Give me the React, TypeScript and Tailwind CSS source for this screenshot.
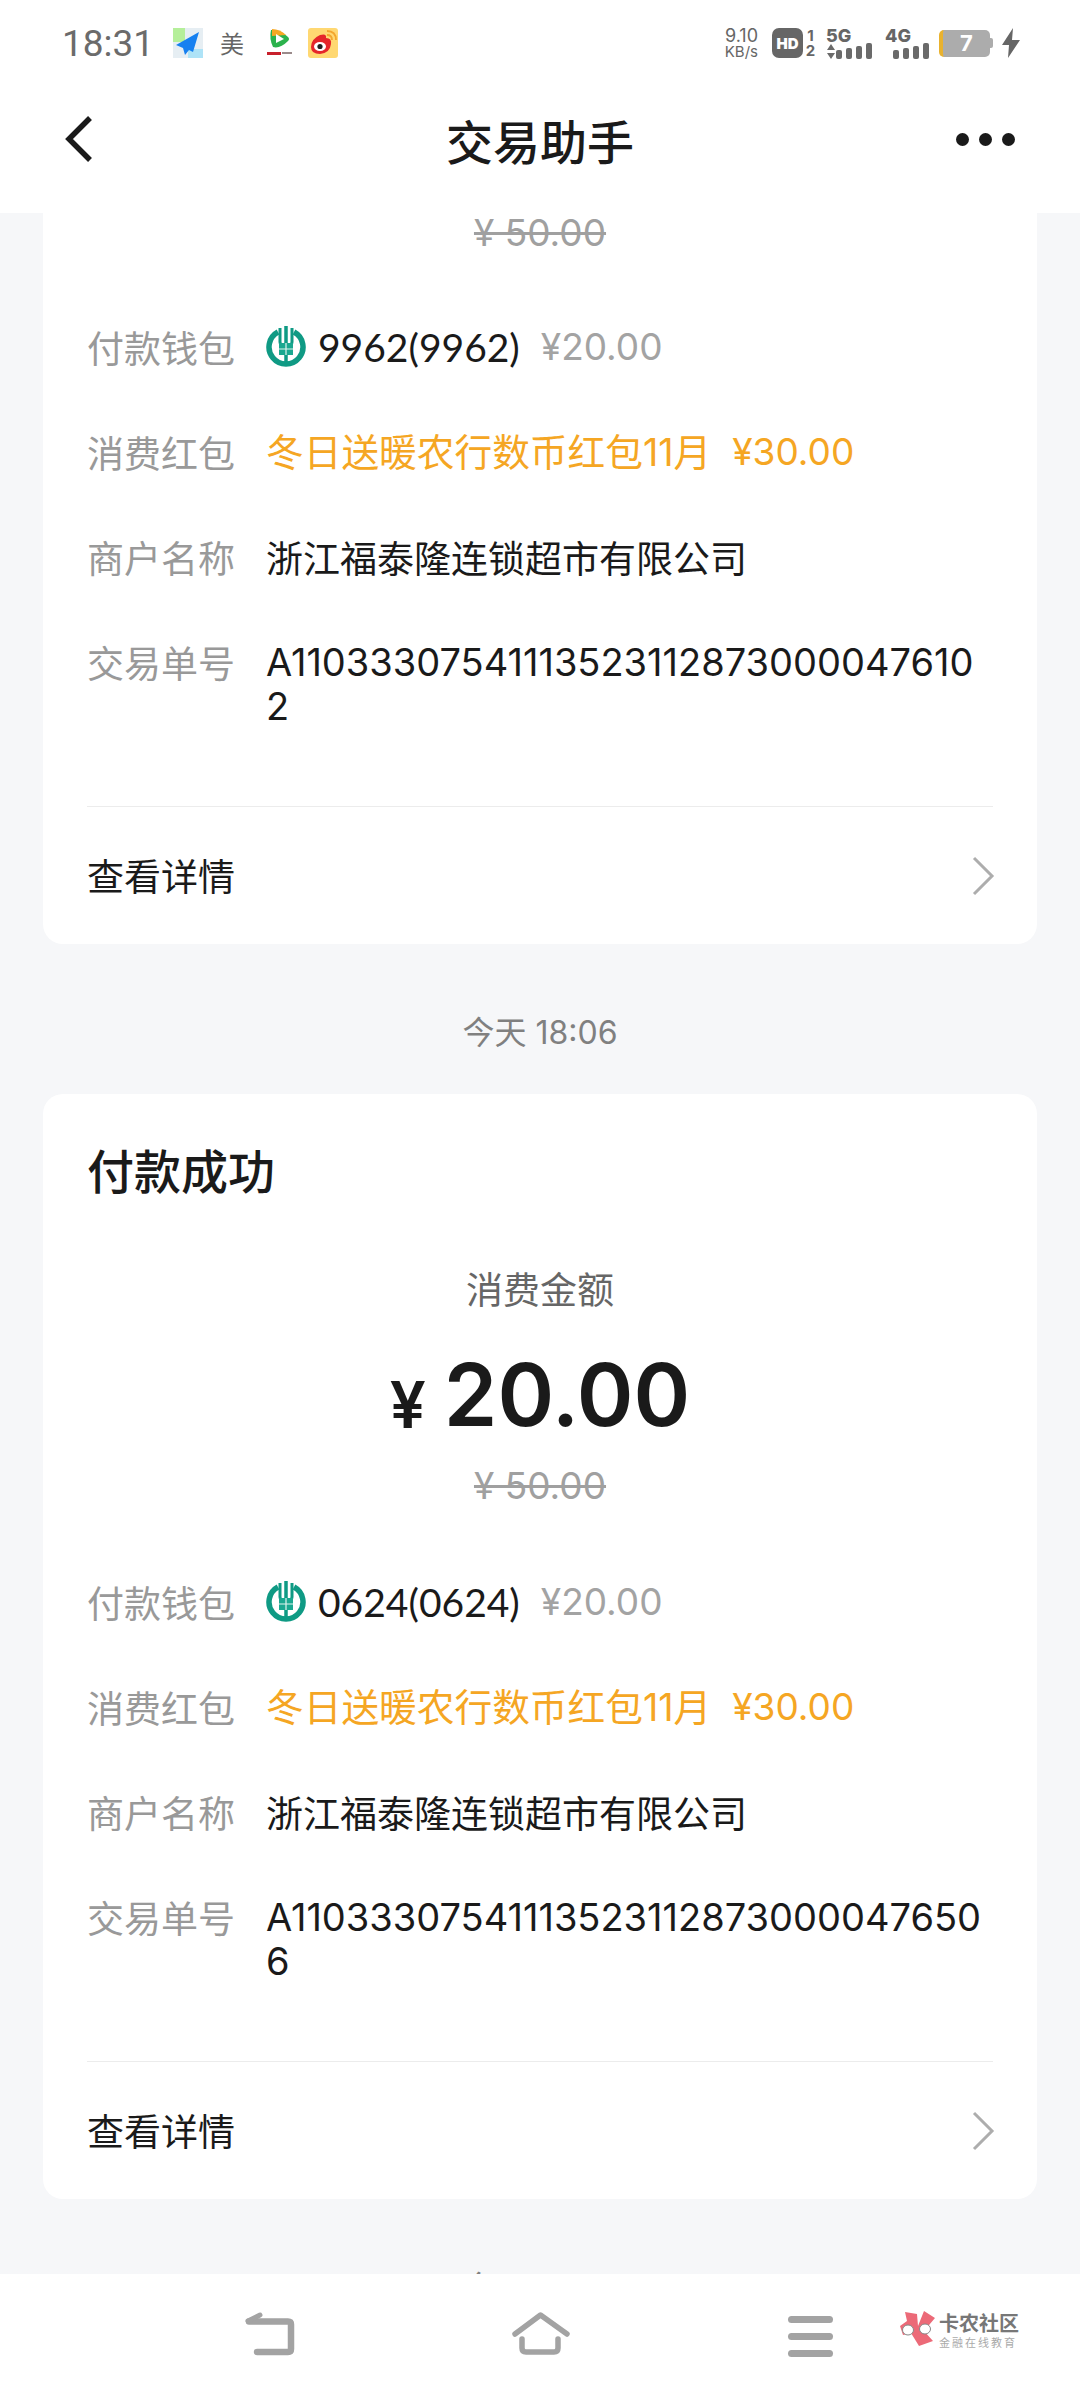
import React from 'react';

const cjk = "font-['Noto_Sans_CJK_SC','Noto_Sans',sans-serif]";

function BankIcon() {
  return (
    <svg width="40" height="42" viewBox="0 0 40 42" className="shrink-0">
      <path d="M12 6 A17 17 0 1 0 28 6" fill="none" stroke="#0f9a84" strokeWidth="5.5" />
      <path d="M14 2 V16 Q14 20 20 20 Q26 20 26 16 V2" fill="none" stroke="#0f9a84" strokeWidth="3" />
      <path d="M20 0 V36" stroke="#0f9a84" strokeWidth="3.5" />
      <rect x="13" y="17" width="14" height="12" fill="#1aa890" />
      <path d="M13 23 H27 M20 17 V29" stroke="#dff3ee" strokeWidth="1.2" />
    </svg>
  );
}

function Signal() {
  const heights = [9, 11, 13, 16];
  return (
    <div className="flex items-end gap-[4px]">
      {heights.map((h, i) => (
        <span key={i} className="w-[6px] rounded-[2px] bg-[#6a6a6a]" style={{ height: h }} />
      ))}
    </div>
  );
}

function StatusBar() {
  return (
    <div className="flex h-[86px] items-center justify-between pl-[62px] pr-[60px]">
      <div className="flex items-center">
        <span className="w-[111px] font-['Roboto',sans-serif] text-[37px] leading-none text-[#6b6b6b]">18:31</span>
        <svg width="30" height="30" viewBox="0 0 30 30">
          <rect width="30" height="30" fill="#e6eef3" />
          <rect width="12" height="14" fill="#b5ef9a" />
          <rect x="15" y="21" width="15" height="9" fill="#aee3f7" />
          <path d="M26 4 L3 17 L10 20 L12 27 L16 22 L20 24 Z" fill="#1680f0" />
        </svg>
        <span className={`ml-[17px] w-[25px] text-[24px] leading-none text-[#666666] ${cjk}`}>美</span>
        <svg width="28" height="30" viewBox="0 0 28 30" className="ml-[21px]">
          <path d="M5 2 Q14 1 22 9 Q24 11 22 13 Q14 21 7 19 Q3 11 5 2 Z" fill="#2bb24c" />
          <path d="M6 1 Q14 1 20 7 L6 8 Z" fill="#f7a823" />
          <path d="M10 6 L18 11 L10 15 Z" fill="#fff" />
          <rect x="1" y="24" width="14" height="3" fill="#c8202c" />
          <rect x="16" y="24" width="10" height="2" fill="#9a8a8a" />
        </svg>
        <svg width="30" height="30" viewBox="0 0 30 30" className="ml-[14px]">
          <rect width="30" height="30" rx="3" fill="#ffd872" />
          <path d="M3 19 Q3 11 12 7 Q19 5 18 10 Q24 10 23 16 Q22 25 12 26 Q3 26 3 19 Z" fill="#e5262a" />
          <ellipse cx="12" cy="18.5" rx="6" ry="4.5" fill="#fff" />
          <circle cx="12" cy="18.5" r="2.6" fill="#222" />
          <path d="M19 3 Q28 3 28 12 M19 7 Q24 7 24 12" fill="none" stroke="#f3a62c" strokeWidth="1.8" />
        </svg>
      </div>
      <div className="flex items-center">
        <div className="flex w-[36px] flex-col items-end font-['Inter',sans-serif] text-[#666666]">
          <span className="text-[18px] leading-[16px]">9.10</span>
          <span className="text-[15px] leading-[15px]">KB/s</span>
        </div>
        <span className="ml-[14px] flex h-[30px] w-[31px] items-center justify-center rounded-[7px] bg-[#666666] font-['Inter',sans-serif] text-[15px] font-black leading-none text-white">HD</span>
        <div className="ml-[2px] flex w-[11px] flex-col items-center font-['Inter',sans-serif] text-[15px] font-bold leading-[15px] text-[#666666]">
          <span>1</span>
          <span>2</span>
        </div>
        <div className="ml-[10px] flex w-[46px] flex-col font-['Inter',sans-serif] text-[#666666]">
          <span className="text-[18px] font-extrabold leading-[15px]">5G</span>
          <div className="flex items-end justify-between">
            <svg width="10" height="15" viewBox="0 0 10 15">
              <path d="M5 0 L9 6 H1 Z M1 9 H9 L5 15 Z" fill="#6a6a6a" />
            </svg>
            <Signal />
          </div>
        </div>
        <div className="ml-[13px] flex w-[44px] flex-col font-['Inter',sans-serif] text-[#666666]">
          <span className="text-[18px] font-extrabold leading-[15px]">4G</span>
          <div className="flex items-end justify-end">
            <Signal />
          </div>
        </div>
        <div className="ml-[10px] flex items-center">
          <div className="flex h-[27px] w-[51px] items-center justify-center overflow-hidden rounded-[5px] border-l-[4px] border-l-[#e9b22e] bg-[#acacac]">
            <span className="font-['Inter',sans-serif] text-[22px] font-bold leading-none text-white">7</span>
          </div>
          <span className="h-[10px] w-[3px] rounded-r-[2px] bg-[#acacac]" />
        </div>
        <svg width="18" height="30" viewBox="0 0 18 30" className="ml-[9px]">
          <path d="M11 0 L0 17 H7 L6 30 L18 12 H10 Z" fill="#666666" />
        </svg>
      </div>
    </div>
  );
}

function Header() {
  return (
    <div className="relative z-10 h-[213px] shrink-0 bg-white">
      <StatusBar />
      <div className="flex h-[106px] items-center justify-between px-[65px]">
        <div className="w-[59px]">
          <svg width="28" height="48" viewBox="0 0 28 48">
            <path d="M25 3 L4 24 L25 45" fill="none" stroke="#1a1a1a" strokeWidth="5.5" />
          </svg>
        </div>
        <span className={`text-[47px] font-medium leading-none text-[#1a1a1a] ${cjk}`}>交易助手</span>
        <div className="flex w-[59px] justify-between">
          <span className="h-[13px] w-[13px] rounded-full bg-[#1a1a1a]" />
          <span className="h-[13px] w-[13px] rounded-full bg-[#1a1a1a]" />
          <span className="h-[13px] w-[13px] rounded-full bg-[#1a1a1a]" />
        </div>
      </div>
    </div>
  );
}

function Row({ label, children }: { label: string; children: React.ReactNode }) {
  return (
    <div className="flex">
      <span className="w-[179px] shrink-0 text-[#999999]">{label}</span>
      <div className="min-w-0 flex-1">{children}</div>
    </div>
  );
}

interface CardProps {
  wallet: string;
  orderNo: string;
  partial?: boolean;
}

function Card({ wallet, orderNo, partial = false }: CardProps) {
  return (
    <div className={`mx-[43px] bg-white ${partial ? 'rounded-b-[20px]' : 'rounded-[20px] pt-[45px]'}`}>
      {!partial && (
        <>
          <div className="h-[60px] pl-[44px] text-[47px] font-medium leading-[60px] text-[#1a1a1a]">付款成功</div>
          <div className="mt-[67px] text-center text-[37px] leading-[44px] text-[#666666]">消费金额</div>
          <div className="mt-[29px] flex h-[112px] items-center justify-center font-['Inter',sans-serif] font-semibold text-[#1a1a1a]">
            <span className="translate-y-[10px] text-[64px] leading-none">¥</span>
            <span className="ml-[18px] text-[86px] leading-none">20.00</span>
          </div>
        </>
      )}
      <div className={`${partial ? 'leading-[40px]' : 'mt-[13px] leading-[44px]'} text-center font-['Inter',sans-serif] text-[37px] text-[#a0a0a0] line-through`}>
        ¥ 50.00
      </div>
      <div className={`mt-[72px] flex flex-col gap-[61px] pl-[44px] pr-[42px] text-[37px] leading-[44px] ${cjk}`}>
        <Row label="付款钱包">
          <div className="flex h-[44px] items-center">
            <BankIcon />
            <span className="ml-[12px] font-['Lato',sans-serif] text-[39px] text-[#1a1a1a]">{wallet}</span>
            <span className="ml-[21px] font-['Inter',sans-serif] text-[37px] text-[#a3a3a3]">¥20.00</span>
          </div>
        </Row>
        <Row label="消费红包">
          <div className="flex h-[44px] items-center text-[#f5a623]">
            <span className="font-['Inter','Noto_Sans_CJK_SC',sans-serif] text-[37.7px]">冬日送暖农行数币红包11月</span>
            <span className="ml-[21px] font-['Inter',sans-serif] text-[37px]">¥30.00</span>
          </div>
        </Row>
        <Row label="商户名称">
          <div className="text-[#1a1a1a]">浙江福泰隆连锁超市有限公司</div>
        </Row>
        <Row label="交易单号">
          <div className="break-all font-['Inter',sans-serif] text-[38px] text-[#1a1a1a]">{orderNo}</div>
        </Row>
      </div>
      <div className="mx-[44px] mt-[78px] h-px bg-[#ececec]" />
      <div className={`flex h-[137px] items-center justify-between pl-[44px] pr-[42px] text-[37px] text-[#1a1a1a] ${cjk}`}>
        <span>查看详情</span>
        <svg width="24" height="40" viewBox="0 0 24 40">
          <path d="M3 2 L21 20 L3 38" fill="none" stroke="#adadad" strokeWidth="3" />
        </svg>
      </div>
    </div>
  );
}

function TimeLabel({ last = false }: { last?: boolean }) {
  return (
    <div className={`h-[152px] pt-[67px] ${last ? '' : '-mb-[2px]'} text-center font-['Inter','Noto_Sans_CJK_SC',sans-serif] text-[32px] leading-[44px] text-[#808080]`}>
      今天 18:06
    </div>
  );
}

function BottomNav() {
  return (
    <div className="relative z-10 flex h-[126px] shrink-0 items-start bg-white pl-[245px] pt-[38px]">
      <svg width="52" height="46" viewBox="0 0 52 46">
        <path d="M4 9.5 H43 Q46 9.5 46 12.5 V37 Q46 40 43 40 H12" fill="none" stroke="#a3a3a3" strokeWidth="6.5" strokeLinecap="round" />
        <path d="M3 9 L15 3" fill="none" stroke="#a3a3a3" strokeWidth="5" strokeLinecap="round" />
      </svg>
      <svg width="58" height="46" viewBox="0 0 58 46" className="ml-[215px]">
        <path d="M3 22 L28.5 3 L55 22" fill="none" stroke="#a3a3a3" strokeWidth="5.5" strokeLinecap="round" strokeLinejoin="round" />
        <path d="M10 27 V36 Q10 40 14 40 H42 Q46 40 46 36 V27" fill="none" stroke="#a3a3a3" strokeWidth="5.5" strokeLinecap="round" />
      </svg>
      <div className="ml-[218px] flex w-[45px] flex-col gap-[10px] pt-[4px]">
        <span className="h-[7px] rounded-full bg-[#a3a3a3]" />
        <span className="h-[7px] rounded-full bg-[#a3a3a3]" />
        <span className="h-[7px] rounded-full bg-[#a3a3a3]" />
      </div>
      <div className="ml-[67px] -mt-[1px] flex items-start">
        <svg width="36" height="36" viewBox="0 0 36 36">
          <path d="M5 1 L17 3 L18 15 L24 0 L35 7 L24 20 L33 30 L19 35 L11 22 L3 24 L0 15 L7 10 Z" fill="#ec6a78" />
          <ellipse cx="8" cy="19" rx="5.5" ry="5" fill="#fff" stroke="#888" strokeWidth="1" />
          <ellipse cx="25" cy="18" rx="5.5" ry="5" fill="#fff" stroke="#888" strokeWidth="1" />
        </svg>
        <div className={`ml-[3px] flex flex-col ${cjk}`}>
          <span className="text-[20px] font-bold leading-[24px] text-[#777777]">卡农社区</span>
          <span className="whitespace-nowrap text-[11px] leading-[14px] tracking-[2px] text-[#aaaaaa]">金融在线教育</span>
        </div>
      </div>
    </div>
  );
}

export default function App() {
  return (
    <div className={`flex h-[2400px] w-[1080px] flex-col overflow-hidden bg-[#f6f7f9] ${cjk}`}>
      <Header />
      <div className="min-h-0 flex-1 overflow-hidden">
        <Card partial wallet="9962(9962)" orderNo="A110333075411135231128730000476102" />
        <TimeLabel />
        <Card wallet="0624(0624)" orderNo="A110333075411135231128730000476506" />
        <TimeLabel last />
      </div>
      <BottomNav />
    </div>
  );
}
